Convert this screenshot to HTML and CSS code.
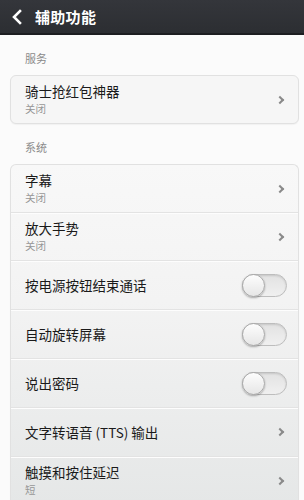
FILE: index.html
```html
<!DOCTYPE html>
<html lang="zh">
<head>
<meta charset="utf-8">
<link rel="stylesheet" href="styles.css">
</head>
<body>
<header class="topbar">
  <svg class="back" width="12" height="16" viewBox="0 0 12 16"><path d="M9 2 L3 8 L9 14" fill="none" stroke="#fff" stroke-width="2.6" stroke-linecap="square"/></svg>
  <span class="title">辅助功能</span>
</header>
<main class="content">
  <div class="label">服务</div>
  <div class="card">
    <div class="row">
      <div class="texts"><div class="t">骑士抢红包神器</div><div class="s">关闭</div></div>
      <span class="chev"></span>
    </div>
  </div>
  <div class="label">系统</div>
  <div class="card card2">
    <div class="row">
      <div class="texts"><div class="t">字幕</div><div class="s">关闭</div></div>
      <span class="chev"></span>
    </div>
    <div class="row">
      <div class="texts"><div class="t">放大手势</div><div class="s">关闭</div></div>
      <span class="chev"></span>
    </div>
    <div class="row single">
      <div class="texts"><div class="t">按电源按钮结束通话</div></div>
      <span class="toggle"><span class="knob"></span></span>
    </div>
    <div class="row single">
      <div class="texts"><div class="t">自动旋转屏幕</div></div>
      <span class="toggle"><span class="knob"></span></span>
    </div>
    <div class="row single">
      <div class="texts"><div class="t">说出密码</div></div>
      <span class="toggle"><span class="knob"></span></span>
    </div>
    <div class="row single">
      <div class="texts"><div class="t">文字转语音 (TTS) 输出</div></div>
      <span class="chev"></span>
    </div>
    <div class="row">
      <div class="texts"><div class="t">触摸和按住延迟</div><div class="s">短</div></div>
      <span class="chev"></span>
    </div>
  </div>
</main>
</body>
</html>
```
FILE: styles.css
```css
* { box-sizing: border-box; }
html, body { margin: 0; padding: 0; }
body {
  width: 304px;
  height: 500px;
  overflow: hidden;
  background: #fbfbfb;
  font-family: "Noto Sans CJK SC", "Noto Sans", sans-serif;
  color: #1e1e1e;
}
.topbar {
  height: 35px;
  background: linear-gradient(#34363b, #2c2e32);
  border-bottom: 2px solid #1d1e21;
  display: flex;
  align-items: center;
  padding-left: 11px;
  gap: 12px;
}
.back { display: block; }
.title {
  color: #fff;
  font-size: 15px;
  font-weight: 700;
  letter-spacing: 0.3px;
}
.content {
  padding: 0 5px 0 10px;
}
.label {
  height: 40px;
  padding: 15px 0 0 15px;
  font-size: 11px;
  line-height: 16px;
  color: #8a8a8a;
}
.card {
  background: #f6f6f6;
  border: 1px solid #e1e1e1;
  border-radius: 6px;
  box-shadow: 0 1px 1px rgba(0,0,0,0.04);
}
.card2 {
  background: linear-gradient(#f8f8f8 0%, #f3f3f3 40%, #e5e7e7 100%);
  border-bottom: none;
  border-radius: 6px 6px 0 0;
}
.row {
  height: 48px;
  display: flex;
  align-items: center;
  padding: 0 11px 0 14px;
  border-top: 1px solid #e3e3e3;
  box-shadow: inset 0 1px 0 #fdfdfd;
}
.card > .row:first-child { border-top: none; box-shadow: none; height: 47px; }
.row.single { height: 49px; }
.texts { flex: 1; }
.t {
  font-size: 13.5px;
  line-height: 20px;
  color: #1a1a1a;
}
.s {
  font-size: 10.5px;
  line-height: 15px;
  color: #979797;
}
.row:not(.single) .texts { margin-top: -2px; }
.chev {
  width: 6px;
  height: 6px;
  border-top: 2px solid #8a8a8a;
  border-right: 2px solid #8a8a8a;
  transform: rotate(45deg);
  margin-right: 4px;
}
.toggle {
  position: relative;
  width: 45px;
  height: 23px;
  border-radius: 12px;
  background: linear-gradient(#e2e2e2, #f0f0f0);
  border: 1px solid #bdbdbd;
  box-shadow: inset 0 1px 2px rgba(0,0,0,0.12);
}
.knob {
  position: absolute;
  left: -1px;
  top: -1px;
  width: 23px;
  height: 23px;
  border-radius: 50%;
  background: linear-gradient(#fdfdfd, #e6e6e6);
  border: 1px solid #a9a9a9;
  box-shadow: 0 1px 2px rgba(0,0,0,0.3);
}
```
